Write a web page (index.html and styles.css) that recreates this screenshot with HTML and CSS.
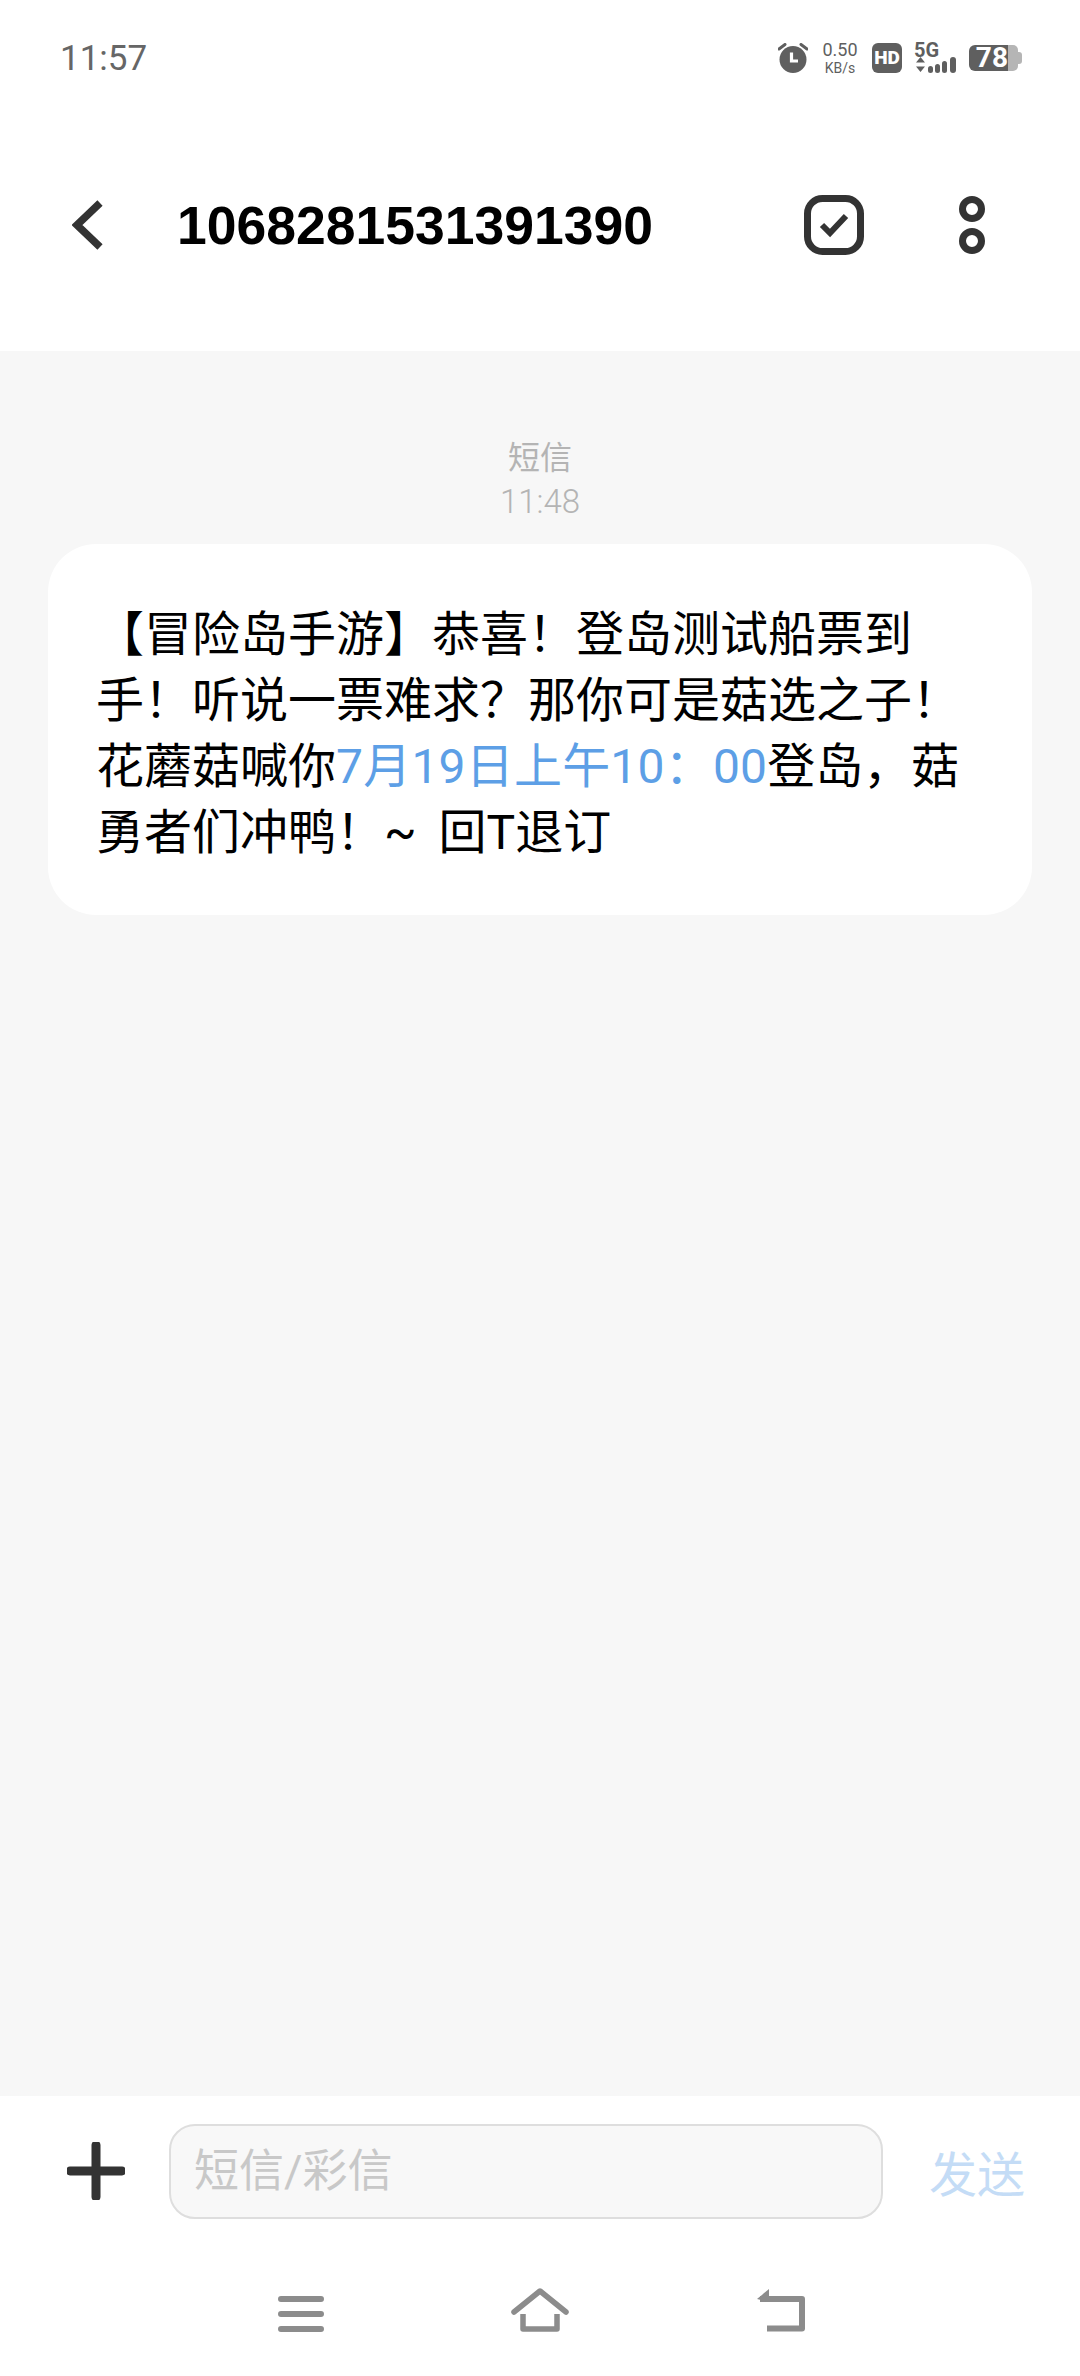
FILE: index.html
```html
<!DOCTYPE html>
<html lang="zh-CN">
<head>
  <meta charset="UTF-8">
  <meta name="viewport" content="width=device-width, initial-scale=1.0">
  <title>1068281531391390</title>
  <link rel="stylesheet" href="styles.css">
</head>
<body>
  <div class="status-bar">
    <span class="clock">11:57</span>
    <div class="status-icons">
      <svg class="alarm" width="30" height="30" viewBox="0 0 30 30">
        <circle cx="15" cy="16.5" r="13.5" fill="#5f5f5f"/>
        <path d="M1 6 L7 1.5 M29 6 L23 1.5" stroke="#5f5f5f" stroke-width="3" stroke-linecap="round"/>
        <path d="M13.5 9.5 V18 H20" fill="none" stroke="#fff" stroke-width="3.2"/>
      </svg>
      <div class="speed">
        <span class="speed-value">0.50</span>
        <span class="speed-unit">KB/s</span>
      </div>
      <span class="hd">HD</span>
      <div class="signal">
        <span class="net">5G</span>
        <svg width="44" height="17" viewBox="0 0 44 17">
          <path d="M2 6.5 L6.5 1 L11 6.5 Z M2 10.5 H11 L6.5 16 Z" fill="#5f5f5f"/>
          <rect x="14" y="10" width="5" height="7" rx="2.5" fill="#5f5f5f"/>
          <rect x="21" y="8" width="5" height="9" rx="2.5" fill="#5f5f5f"/>
          <rect x="28" y="5" width="5" height="12" rx="2.5" fill="#5f5f5f"/>
          <rect x="36" y="1" width="6" height="16" rx="3" fill="#5f5f5f"/>
        </svg>
      </div>
      <div class="battery">
        <span class="battery-level">78</span>
        <span class="battery-rest"></span>
        <span class="battery-tip"></span>
      </div>
    </div>
  </div>

  <header class="title-bar">
    <svg class="back" width="32" height="50" viewBox="0 0 32 50">
      <path d="M28 3 L5 25 L28 47" fill="none" stroke="#333" stroke-width="7.500"/>
    </svg>
    <h1 class="number">1068281531391390</h1>
    <svg class="select" width="60" height="60" viewBox="0 0 60 60">
      <rect x="3.500" y="3.500" width="53" height="53" rx="15" fill="none" stroke="#333" stroke-width="7"/>
      <path d="M18 30 L26 38 L42 21" fill="none" stroke="#333" stroke-width="6"/>
    </svg>
    <svg class="more" width="26" height="58" viewBox="0 0 26 58">
      <circle cx="13" cy="13" r="9.500" fill="none" stroke="#333" stroke-width="7"/>
      <circle cx="13" cy="45" r="9.500" fill="none" stroke="#333" stroke-width="7"/>
    </svg>
  </header>

  <main class="thread">
    <div class="msg-meta">
      <div class="msg-type">短信</div>
      <div class="msg-time">11:48</div>
    </div>
    <div class="bubble">【冒险岛手游】恭喜&#xFF01;登岛测试船票到<br>手&#xFF01;听说一票难求&#xFF1F;那你可是菇选之子&#xFF01;<br>花蘑菇喊你<span class="link">7月19日上午10&#xFF1A;00</span>登岛&#xFF0C;菇<br>勇者们冲鸭&#xFF01;~ <span class="unsub">回T退订</span></div>
  </main>

  <div class="composer">
    <svg class="add" width="58" height="58" viewBox="0 0 58 58">
      <path d="M29 3 V55 M3 29 H55" stroke="#333" stroke-width="9" stroke-linecap="round"/>
    </svg>
    <div class="input">短信/彩信</div>
    <span class="send">发送</span>
  </div>

  <nav class="nav-bar">
    <svg width="46" height="36" viewBox="0 0 46 36">
      <path d="M3 3 H43 M3 18 H43 M3 33 H43" stroke="#8c8c8c" stroke-width="6" stroke-linecap="round"/>
    </svg>
    <svg width="58" height="44" viewBox="0 0 58 44">
      <path d="M3 24 L29 3 L55 24" fill="none" stroke="#8c8c8c" stroke-width="5.500" stroke-linecap="round" stroke-linejoin="round"/>
      <path d="M12 26 V41 H46 V26" fill="none" stroke="#8c8c8c" stroke-width="5.500" stroke-linejoin="round"/>
    </svg>
    <svg width="50" height="44" viewBox="0 0 50 44">
      <path d="M11 40.500 H46 V11 H4" fill="none" stroke="#8c8c8c" stroke-width="6" stroke-linejoin="round"/>
      <path d="M1 11 L13 1 V14 Z" fill="#8c8c8c"/>
    </svg>
  </nav>
</body>
</html>
```

FILE: styles.css
```css
* {
  box-sizing: border-box;
}
body {
  display: flex;
  flex-direction: column;
  width: 1080px;
  height: 2376px;
  margin: 0;
  overflow: hidden;
  background-color: white;
  font-family: Roboto, "Noto Sans CJK SC", sans-serif;
}

/* status bar */
.status-bar {
  display: flex;
  justify-content: space-between;
  align-items: center;
  height: 114px;
  padding: 2px 58px 0 60px;
  flex-shrink: 0;
}
.clock {
  font-size: 35px;
  color: #666;
}
.status-icons {
  display: flex;
  align-items: center;
  color: #5f5f5f;
}
.speed {
  display: flex;
  flex-direction: column;
  align-items: center;
  width: 40px;
  margin: 0 12px;
}
.speed-value {
  font-size: 18px;
  line-height: 21px;
}
.speed-unit {
  font-size: 14px;
  line-height: 17px;
}
.hd {
  width: 30px;
  height: 30px;
  margin-right: 12px;
  border-radius: 6px;
  background-color: #5f5f5f;
  color: white;
  font-size: 19px;
  font-weight: 900;
  line-height: 30px;
  text-align: center;
}
.signal {
  display: flex;
  flex-direction: column;
  width: 44px;
  height: 30px;
  margin-right: 11px;
}
.signal svg {
  display: block;
  margin-top: -2px;
}
.net {
  font-size: 20px;
  font-weight: 700;
  line-height: 15px;
}
.battery {
  display: flex;
  align-items: center;
  width: 53px;
  height: 26px;
}
.battery-level {
  width: 39px;
  border-radius: 6px 0 0 6px;
  background-color: #5f5f5f;
  color: white;
  font-size: 28px;
  font-weight: 700;
  line-height: 26px;
  text-align: right;
}
.battery-rest {
  width: 10px;
  height: 26px;
  border-radius: 0 5px 5px 0;
  background-color: #b5b5b5;
}
.battery-tip {
  width: 4px;
  height: 12px;
  border-radius: 0 3px 3px 0;
  background-color: #b5b5b5;
}

/* title bar */
.title-bar {
  display: flex;
  align-items: center;
  height: 237px;
  padding: 0 95px 16px 72px;
  flex-shrink: 0;
}
.number {
  flex: 1;
  margin: 2px 0 0 73px;
  color: black;
  font-family: "Liberation Sans", sans-serif;
  font-size: 53.5px;
  font-weight: 700;
}
.select {
  margin-right: 95px;
}

/* message list */
.thread {
  flex: 1;
  padding: 0 48px;
  background-color: #f7f7f7;
}
.msg-meta {
  padding: 85px 0 20px;
  text-align: center;
  color: #b4b4b4;
}
.msg-type {
  font-size: 32px;
  line-height: 44px;
}
.msg-time {
  font-size: 33px;
  font-weight: 300;
  line-height: 44px;
}
.bubble {
  height: 371px;
  padding: 58px 20px 0 48px;
  border-radius: 48px;
  background-color: white;
  color: black;
  font-size: 48px;
  line-height: 66px;
  white-space: nowrap;
}
.link {
  color: #5d9fe6;
  letter-spacing: 0.2px;
}
.unsub {
  margin-left: 10px;
}

/* input row */
.composer {
  display: flex;
  align-items: center;
  height: 150px;
  padding: 0 54px 0 67px;
  flex-shrink: 0;
  background-color: white;
}
.add {
  flex-shrink: 0;
}
.input {
  flex-shrink: 0;
  width: 714px;
  height: 95px;
  margin: 0 46px 0 44px;
  padding-left: 23px;
  border: 2px solid #dedede;
  border-radius: 26px;
  background-color: #f8f8f8;
  color: #c8c8c8;
  font-size: 45px;
  line-height: 91px;
}
.send {
  flex-shrink: 0;
  color: #c4dcf6;
  font-size: 48px;
  white-space: nowrap;
}

/* navigation bar */
.nav-bar {
  display: flex;
  align-items: flex-end;
  justify-content: center;
  gap: 187px;
  height: 130px;
  padding: 0 0 44px 4px;
  flex-shrink: 0;
}
```
